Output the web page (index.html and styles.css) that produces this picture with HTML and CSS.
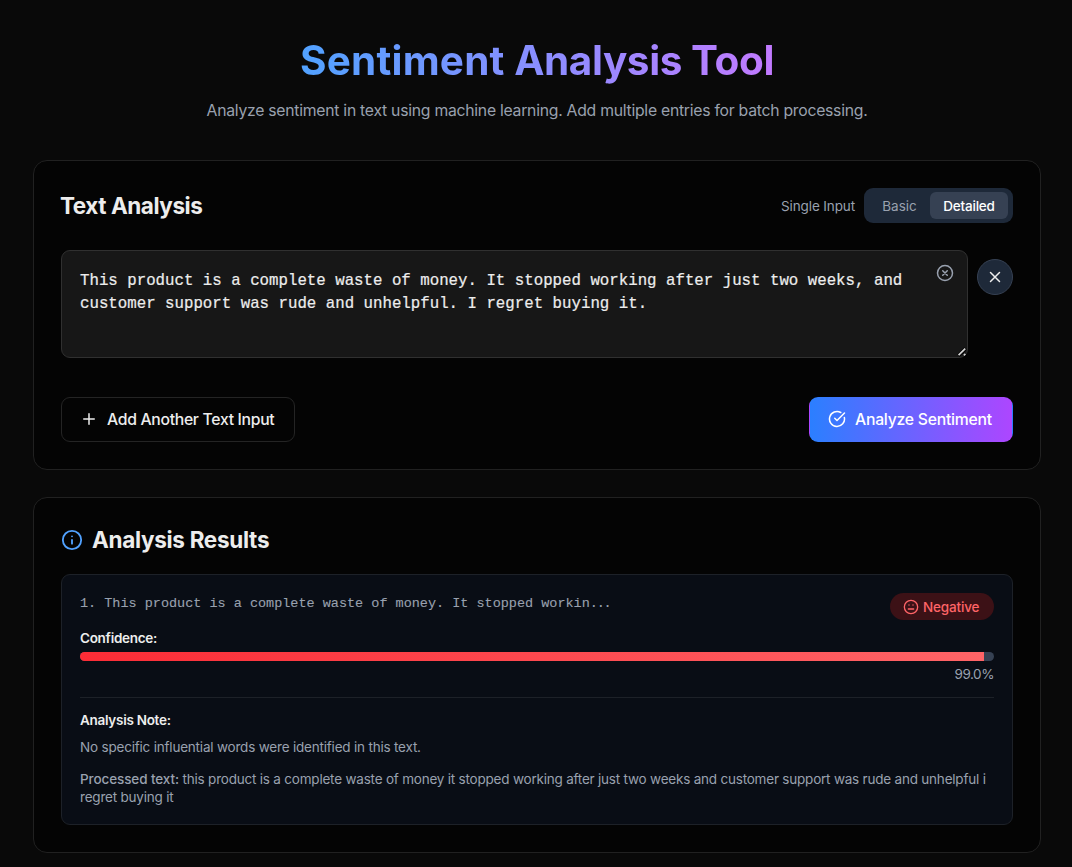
FILE: index.html
```html
<!DOCTYPE html>
<html lang="en">
<head>
<meta charset="utf-8">
<title>Sentiment Analysis Tool</title>
<link rel="stylesheet" href="styles.css">
</head>
<body>
<main class="page">
  <header class="hero">
    <h1 class="title"><span class="title-wide">Sentiment</span> <span class="title-tight">Analysis Tool</span></h1>
    <p class="subtitle">Analyze sentiment in text using machine learning. Add multiple entries for batch processing.</p>
  </header>

  <section class="card input-card">
    <div class="card-head">
      <h2 class="heading">Text Analysis</h2>
      <div class="mode">
        <span class="mode-label">Single Input</span>
        <div class="toggle">
          <button class="tab tab-basic">Basic</button>
          <button class="tab tab-active">Detailed</button>
        </div>
      </div>
    </div>
    <div class="entry">
      <div class="field">
        <textarea class="text" spellcheck="false">This product is a complete waste of money. It stopped working after just two weeks, and customer support was rude and unhelpful. I regret buying it.</textarea>
        <svg class="clear" viewBox="0 0 24 24"><circle cx="12" cy="12" r="10"/><path d="m15 9-6 6M9 9l6 6"/></svg>
        <svg class="grip" viewBox="0 0 10 10"><path class="grip-edge" d="M1.5 8.5 8.5 1.5M7 8.8 8.8 7"/><path class="grip-line" d="M1.6 8.2 8.2 1.6M6.8 8.4 8.4 6.8"/></svg>
      </div>
      <button class="remove" aria-label="Remove"><svg class="icon-x" viewBox="0 0 24 24"><path d="M18 6 6 18M6 6l12 12"/></svg></button>
    </div>
    <div class="actions">
      <button class="btn btn-add"><svg class="icon" viewBox="0 0 24 24"><path d="M5 12h14M12 5v14"/></svg><span class="add-label">Add Another Text Input</span></button>
      <button class="btn btn-run"><svg class="icon" viewBox="0 0 24 24"><path d="M21.801 10A10 10 0 1 1 17 3.335"/><path d="m9 11 3 3L22 4"/></svg><span class="run-label">Analyze Sentiment</span></button>
    </div>
  </section>

  <section class="card results-card">
    <div class="results-head">
      <svg class="info" viewBox="0 0 24 24"><circle cx="12" cy="12" r="10"/><path d="M12 16v-4M12 8h.01"/></svg>
      <h2 class="heading results-title">Analysis Results</h2>
    </div>
    <article class="result">
      <div class="result-top">
        <p class="excerpt">1. This product is a complete waste of money. It stopped workin<span class="dots">...</span></p>
        <span class="badge"><svg class="face" viewBox="0 0 24 24"><circle cx="12" cy="12" r="10"/><path d="M8 15h8M9 9h.01M15 9h.01"/></svg><span class="badge-label">Negative</span></span>
      </div>
      <p class="label confidence">Confidence:</p>
      <div class="bar"><div class="bar-fill" style="width:98.95%"></div></div>
      <p class="percent">99.0%</p>
      <div class="note">
        <p class="label note-title">Analysis Note:</p>
        <p class="muted note-text">No specific influential words were identified in this text.</p>
        <p class="muted processed"><span class="strong">Processed text:</span> this product is a complete waste of money it stopped working after just two weeks and customer support was rude and unhelpful i regret buying it</p>
      </div>
    </article>
  </section>
</main>
</body>
</html>
```
FILE: styles.css
```css
* { box-sizing: border-box; margin: 0; padding: 0; }
html { background: #090909; overflow: hidden; }
body { font-family: Inter, "Liberation Sans", sans-serif; color: #ededed; font-size: 15.75px; }
button { font: inherit; color: inherit; border: 0; background: none; }
svg { fill: none; stroke: currentColor; stroke-width: 2; stroke-linecap: round; stroke-linejoin: round; flex: none; }

.page { width: 1008px; margin-left: 33px; padding-top: 36px; display: flex; flex-direction: column; }
.hero { height: 124px; text-align: center; display: flex; flex-direction: column; align-items: center; }
.title { font-size: 40.5px; line-height: 50px; font-weight: 700; white-space: nowrap; color: transparent; background: linear-gradient(to right, #51a2ff, #c27aff); background-clip: text; -webkit-background-clip: text; }
.title-wide { letter-spacing: 0.2px; }
.title-tight { letter-spacing: -0.42px; }
.subtitle { margin-top: 12px; font-size: 15.75px; line-height: 26px; letter-spacing: -0.26px; color: #99a1af; white-space: nowrap; }

.card { background: #040404; border: 1px solid #212121; border-radius: 14px; padding: 27px; }
.input-card { height: 310px; }
.card-head { display: flex; justify-content: space-between; height: 35px; align-items: center; }
.heading { font-size: 22.5px; line-height: 31px; margin-left: -1px; font-weight: 650; letter-spacing: -0.45px; color: #ededed; white-space: nowrap; }
.mode { display: flex; align-items: center; gap: 9px; }
.mode-label { font-size: 13.5px; letter-spacing: -0.12px; color: #99a1af; white-space: nowrap; }
.toggle { display: flex; width: 149px; height: 35px; padding: 4px 5px 4px 4px; background: #1e2939; border-radius: 9px; }
.tab { font-size: 13.5px; height: 27px; border-radius: 6px; color: #99a1af; }
.tab-basic { width: 62px; padding-left: 1px; }
.tab-active { width: 78px; background: #364153; color: #fff; font-weight: 500; letter-spacing: -0.2px; }

.entry { display: flex; gap: 9px; margin-top: 27px; }
.field { position: relative; width: 907px; height: 108px; }
.text { display: block; width: 907px; height: 108px; padding: 18.5px 54px 16px 18px; border: 1px solid #303030; border-radius: 9px; background: #171717; color: #ededed; font-family: "Liberation Mono", monospace; font-size: 15.75px; line-height: 23px; -webkit-text-stroke: 0.2px currentColor; resize: none; outline: 0; overflow: hidden; }
.clear { position: absolute; right: 14px; top: 14px; width: 18px; height: 18px; color: #99a1af; }
.grip { position: absolute; right: 1px; bottom: 1px; width: 10px; height: 10px; stroke-linecap: butt; }
.grip-edge { stroke: #000; stroke-width: 3.4; }
.grip-line { stroke: #d4d4d4; stroke-width: 1.7; }
.remove { width: 36px; height: 36px; margin-top: 9px; border: 1px solid #364153; border-radius: 50%; background: #1e2939; display: flex; align-items: center; justify-content: center; }
.icon-x { width: 18px; height: 18px; }

.actions { display: flex; justify-content: space-between; margin-top: 39px; }
.btn { display: flex; align-items: center; height: 45px; padding: 0 0 1px 18px; gap: 9px; border-radius: 9px; font-weight: 550; font-size: 15.75px; border: 1px solid #242424; white-space: nowrap; }
.icon { width: 18px; height: 18px; }
.btn-add { width: 234px; }
.add-label { letter-spacing: -0.31px; }
.btn-run { width: 204px; color: #fff; border-color: transparent; background: linear-gradient(to right, #2b7fff, #ad46ff); }
.run-label { letter-spacing: -0.24px; }

.results-card { margin-top: 27px; height: 356px; padding-top: 26px; }
.results-head { display: flex; align-items: center; height: 31px; gap: 9px; }
.info { width: 22px; height: 22px; color: #51a2ff; }
.results-title { margin-left: 0; letter-spacing: -0.3px; }
.result { margin-top: 19px; height: 251px; padding: 18px; background: #090d15; border: 1px solid #1d2128; border-radius: 9px; }
.result-top { display: flex; justify-content: space-between; align-items: flex-start; height: 36px; }
.excerpt { margin-top: 1px; font-family: "Liberation Mono", monospace; font-size: 13.5px; line-height: 19px; letter-spacing: -0.01px; color: #99a1af; white-space: pre; -webkit-text-stroke: 0.1px currentColor; }
.dots { letter-spacing: -1.2px; }
.badge { width: 104px; height: 27px; border-radius: 14px; background: #3c1116; color: #ff6467; display: flex; align-items: center; padding-left: 13px; gap: 4px; font-size: 13.5px; font-weight: 550; }
.badge-label { letter-spacing: -0.15px; }
.face { width: 16px; height: 16px; }
.label { font-size: 13.5px; line-height: 18px; font-weight: 570; letter-spacing: -0.28px; color: #ededed; }
.label, .muted, .percent { white-space: nowrap; }
.bar { height: 9px; margin-top: 5px; border-radius: 5px; background: #364153; overflow: hidden; }
.bar-fill { height: 9px; background: linear-gradient(to right, #fb2c36, #ff6467); }
.percent { margin-top: 4px; text-align: right; font-size: 13.5px; line-height: 18px; letter-spacing: -0.45px; color: #99a1af; }
.note { margin-top: 14px; padding-top: 13px; border-top: 1px solid #1d2128; }
.muted { font-size: 13.5px; line-height: 18px; letter-spacing: -0.2px; color: #99a1af; }
.note-text { margin-top: 9px; }
.processed { margin-top: 14px; margin-right: -4px; white-space: normal; letter-spacing: -0.21px; }
.strong { font-weight: 500; letter-spacing: -0.1px; }
```
